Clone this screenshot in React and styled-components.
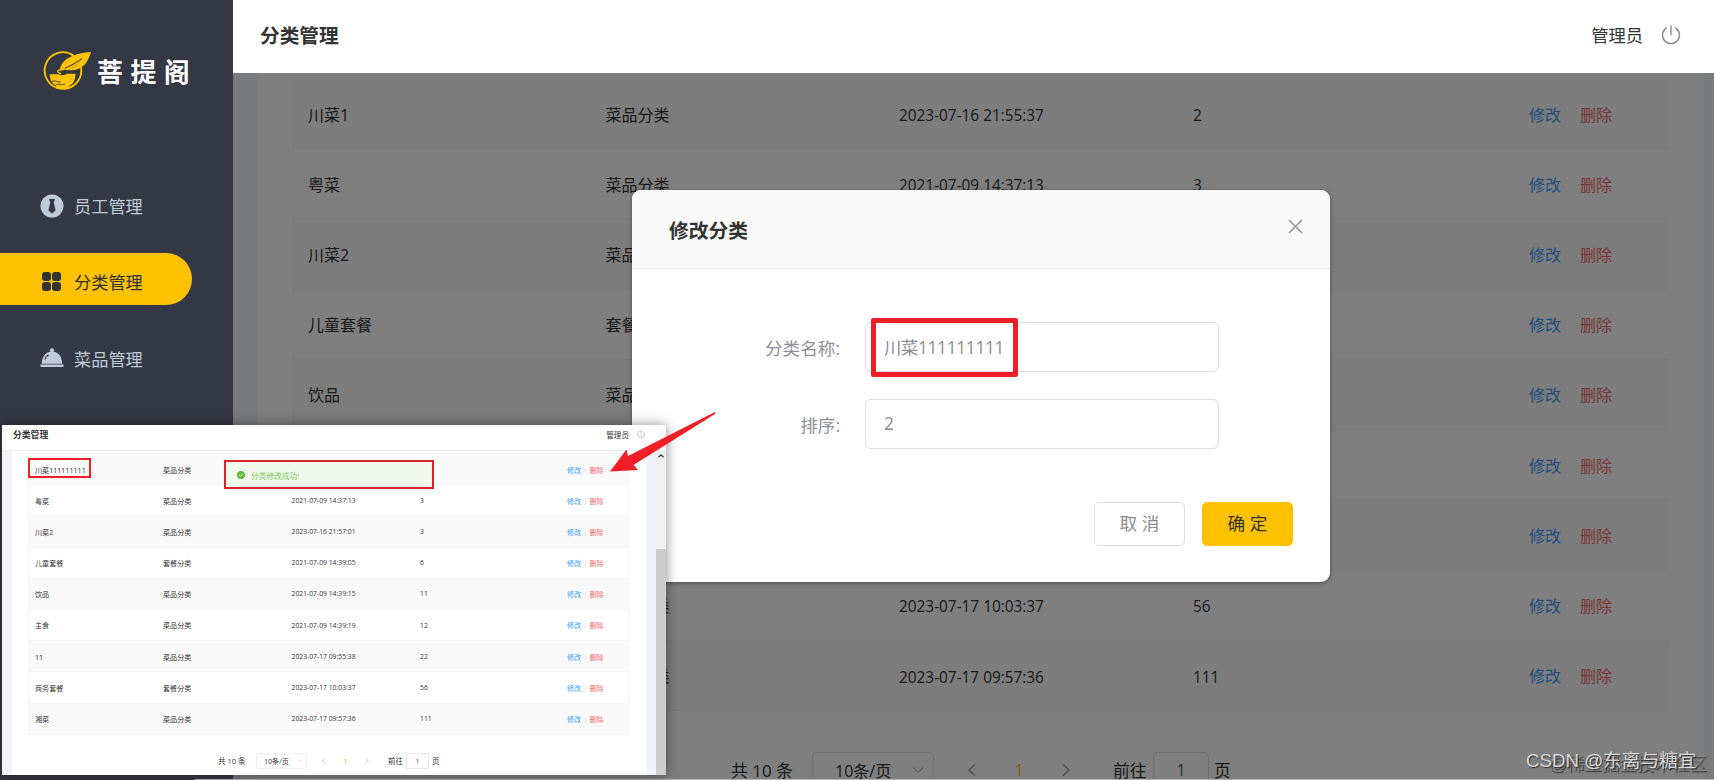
import React, { useState } from 'react'
import styled, { createGlobalStyle, css } from 'styled-components'

const GlobalStyle = createGlobalStyle`
    * {
        box-sizing: border-box;
    }
    body {
        margin: 0;
        overflow: hidden;
        font-family: "Open Sans", "Noto Sans CJK SC", sans-serif;
        color: #333333;
    }
`

const Page = styled.div`
    position: relative;
    display: flex;
    width: 1714px;
    height: 780px;
    overflow: hidden;
    background-color: #ffffff;
`

/* ---------- sidebar ---------- */

const Sidebar = styled.aside`
    flex: 0 0 233px;
    height: 780px;
    background-color: #343744;
`

const LogoBox = styled.div`
    display: flex;
    align-items: center;
    height: 142px;
    padding-left: 42px;
`

const LogoText = styled.span`
    margin-left: 5px;
    font-family: "Noto Sans CJK SC", sans-serif;
    font-size: 26px;
    font-weight: 700;
    line-height: 38px;
    letter-spacing: 7.4px;
    color: #ffffff;
    white-space: nowrap;
`

const Menu = styled.nav`
    display: flex;
    flex-direction: column;
    gap: 24.4px;
    padding-top: 35px;
`

const MenuItem = styled.div`
    display: flex;
    align-items: center;
    width: 192px;
    height: 52px;
    padding: 5px 0 0 40px;
    border-radius: 0 26px 26px 0;
    font-size: 17.2px;
    background-color: ${({ $active }) => ($active ? '#ffc200' : 'transparent')};
    color: ${({ $active }) => ($active ? '#333333' : '#bfcbd9')};
    svg {
        margin-right: 10px;
    }
`

/* ---------- main area ---------- */

const Main = styled.main`
    flex: 1;
    display: flex;
    flex-direction: column;
    height: 780px;
`

const Header = styled.header`
    display: flex;
    align-items: center;
    justify-content: space-between;
    flex: 0 0 73px;
    padding: 0 33px 2px 27px;
`

const HeaderTitle = styled.h1`
    margin: 0;
    font-size: 19.7px;
    line-height: 28px;
`

const UserBox = styled.div`
    display: flex;
    align-items: center;
    gap: 18px;
    padding-bottom: 2px;
    font-size: 17.3px;
`

const Content = styled.section`
    position: relative;
    flex: 1;
    padding: 0 10px 0 24px;
    overflow: hidden;
    background-color: #f3f4f7;
`

const Card = styled.div`
    height: 100%;
    padding: 6px 35px 0;
    background-color: #ffffff;
`

const TableBox = styled.div`
    border: solid #f6f6f7;
    border-width: 0 1px;
`

const Row = styled.div`
    display: grid;
    grid-template-columns: 297.5px 293.5px 294px 336px 1fr;
    align-items: center;
    height: 70.2px;
    padding: 2px 0 0 15px;
    border-bottom: 1px solid #f5f5f7;
    font-size: 16px;
    background-color: ${({ $odd }) => ($odd ? '#fafafa' : '#ffffff')};
    ${({ $mini }) => $mini && css`
        grid-template-columns: 128px 128.5px 128.5px 147px 1fr;
        height: 31.2px;
        padding: 1.5px 0 0 6px;
        font-size: 7.1px;
    `}
`

const Cell = styled.span`
    white-space: nowrap;
    line-height: 1.5;
`

const NumCell = styled(Cell)`
    padding-top: ${({ $mini }) => ($mini ? 0 : 2)}px;
    font-size: 0.96em;
`

const Actions = styled.div`
    display: flex;
    gap: ${({ $mini }) => ($mini ? '3.6px' : '19px')};
    line-height: 1.5;
`

const EditBtn = styled.span`
    color: #409eff;
`

const DelBtn = styled.span`
    color: #f56c6c;
`

const Divider = styled.i`
    width: 1px;
    height: 6px;
    margin-top: 3px;
    background-color: #e8eaec;
`

const Pager = styled.div`
    display: grid;
    grid-template-columns: 81px 122px 160px 19px 40px 56px 1fr;
    align-items: center;
    height: 36px;
    margin: 41px 0 0 439px;
    font-size: 16px;
    ${({ $mini }) => $mini && css`
        grid-template-columns: 38px 51px 81px 18px 23px 1fr;
        height: 16px;
        margin: 18px 0 0 190px;
        font-size: 7.1px;
    `}
`

const Total = styled.span`
    font-size: 1.06em;
    white-space: nowrap;
`

const PageSize = styled.div`
    display: flex;
    align-items: center;
    justify-content: space-between;
    height: 100%;
    padding: ${({ $mini }) => ($mini ? '0 4px 0 7px' : '0 9px 0 22px')};
    border: 1px solid ${({ $mini }) => ($mini ? '#eeeff1' : '#e3e5e8')};
    border-radius: ${({ $mini }) => ($mini ? '2px' : '5px')};
    white-space: nowrap;
`

const Pages = styled.div`
    display: flex;
    align-items: center;
    justify-content: space-between;
    padding: ${({ $mini }) => ($mini ? '0 18px 0 14px' : '0 21px 0 31px')};
`

const Current = styled.b`
    font-weight: 500;
    color: #ffc200;
`

const Jump = styled.span`
    grid-column: ${({ $mini }) => ($mini ? 'auto' : '4 / 6')};
    padding-left: ${({ $mini }) => ($mini ? '0' : '19px')};
    font-size: 1.05em;
    white-space: nowrap;
`

const JumpInput = styled.div`
    display: flex;
    align-items: center;
    justify-content: center;
    height: 100%;
    border: 1px solid ${({ $mini }) => ($mini ? '#e6e7e9' : '#dcdfe6')};
    border-radius: ${({ $mini }) => ($mini ? '1px' : '5px')};
    color: #606266;
`

const PageUnit = styled.span`
    padding-left: ${({ $mini }) => ($mini ? '3px' : '5px')};
    font-size: 1.05em;
`

/* ---------- dialog ---------- */

const Mask = styled.div`
    position: absolute;
    inset: 73px 0 1px 233px;
    background-color: rgba(0, 0, 0, 0.5);
`

const BottomEdge = styled.div`
    position: absolute;
    left: 195px;
    right: 0;
    bottom: 0;
    height: 1px;
    background-color: #b4b4b4;
`

const Dialog = styled.div`
    position: absolute;
    left: 632px;
    top: 190px;
    width: 698px;
    height: 392px;
    border-radius: 9px;
    background-color: #ffffff;
    box-shadow: 0 1px 4px rgba(0, 0, 0, 0.4);
    overflow: hidden;
`

const DialogHeader = styled.div`
    display: flex;
    align-items: center;
    justify-content: space-between;
    height: 79px;
    padding: 0 27px 0 37px;
    border-bottom: 1px solid #e8e8e8;
    background-color: #fafafa;
    svg {
        margin-bottom: 5px;
    }
`

const DialogTitle = styled.h2`
    margin: 3px 0 0;
    font-size: 19.8px;
    line-height: 28px;
`

const DialogBody = styled.div`
    display: flex;
    flex-direction: column;
    gap: 27px;
    padding-top: 53px;
`

const FormItem = styled.label`
    display: flex;
    align-items: center;
    font-size: 17.6px;
    color: #8e9197;
`

const Label = styled.span`
    width: 208px;
    margin: 0 25px 0 0;
    text-align: right;
`

const Input = styled.input`
    width: 354px;
    height: 50px;
    padding: 0 18px 1px;
    border: 1px solid #dcdfe6;
    border-radius: 6px;
    outline: none;
    font-family: inherit;
    font-size: 17.3px;
    letter-spacing: -0.3px;
    color: #8b8d91;
`

const DialogFooter = styled.div`
    display: flex;
    justify-content: flex-end;
    gap: 17px;
    padding: 53px 37px 0 0;
`

const Button = styled.button`
    width: 91px;
    height: 44px;
    padding: 0 0 3px;
    border: 1px solid ${({ $primary }) => ($primary ? '#ffc200' : '#dcdfe6')};
    border-radius: 5px;
    background-color: ${({ $primary }) => ($primary ? '#ffc200' : '#ffffff')};
    color: ${({ $primary }) => ($primary ? '#333333' : '#8a8c91')};
    font-family: inherit;
    font-size: 17.6px;
`

/* ---------- floating result window ---------- */

const Window = styled.div`
    position: absolute;
    left: 2px;
    top: 425px;
    display: flex;
    flex-direction: column;
    width: 664px;
    height: 350px;
    background-color: #ffffff;
    box-shadow: 0 0 12px rgba(0, 0, 0, 0.45);
`

const WindowHeader = styled.div`
    display: flex;
    align-items: center;
    justify-content: space-between;
    flex: 0 0 26px;
    padding: 0 21px 7px 11px;
    border-bottom: 1px solid #ececee;
    font-size: 7.6px;
`

const WindowTitle = styled.b`
    font-size: 8.8px;
`

const WindowUser = styled.span`
    display: flex;
    align-items: center;
    gap: 8px;
`

const WindowBody = styled.div`
    display: flex;
    flex: 1;
    padding-left: 10px;
    background-color: #f2f3f8;
`

const WindowCard = styled.div`
    flex: 0 0 634px;
    padding: 2px 17px 0 16px;
    background-color: #ffffff;
`

const MiniTable = styled(TableBox)`
    border-width: 1px 1px 0;
`

const ScrollTrack = styled.div`
    display: flex;
    flex-direction: column;
    justify-content: space-between;
    align-items: center;
    width: 10px;
    margin-left: auto;
    padding-top: 2px;
    background-color: #f0f0f0;
`

const ScrollThumb = styled.div`
    width: 10px;
    height: 226px;
    background-color: #cdcdcd;
`

const Toast = styled.div`
    position: absolute;
    left: 222px;
    top: 35px;
    display: flex;
    align-items: center;
    gap: 6px;
    width: 210px;
    height: 29px;
    padding: 1px 0 0 11px;
    border: 2px solid #d8262c;
    background-color: #f0f9eb;
    color: #7cc95a;
    font-size: 7.7px;
`

/* ---------- red annotations ---------- */

const Mark = styled.div`
    position: absolute;
    left: ${({ $x }) => $x}px;
    top: ${({ $y }) => $y}px;
    width: ${({ $w }) => $w}px;
    height: ${({ $h }) => $h}px;
    border: ${({ $line }) => $line}px solid #ee1f26;
    border-radius: ${({ $line }) => ($line > 2 ? 2 : 0)}px;
`

const Arrow = styled.svg`
    position: absolute;
    left: 608px;
    top: 408px;
`

const Watermark = styled.span`
    position: absolute;
    left: 1526px;
    top: 747px;
    font-family: "Liberation Sans", "Noto Sans CJK SC", sans-serif;
    font-size: 18.7px;
    line-height: 28px;
    white-space: nowrap;
    color: rgba(235, 235, 235, 0.88);
    text-shadow: 1px 1px 1px rgba(0, 0, 0, 0.6);
`

const WatermarkBack = styled(Watermark)`
    left: 1549px;
    top: 750px;
    font-size: 17.5px;
    color: rgba(150, 150, 150, 0.55);
    text-shadow: 1px 1px 1px rgba(0, 0, 0, 0.55);
`

const dishes = [
    { name: '川菜1', type: '菜品分类', time: '2023-07-16 21:55:37', sort: 2 },
    { name: '粤菜', type: '菜品分类', time: '2021-07-09 14:37:13', sort: 3 },
    { name: '川菜2', type: '菜品分类', time: '2023-07-16 21:57:01', sort: 3 },
    { name: '儿童套餐', type: '套餐分类', time: '2021-07-09 14:39:05', sort: 6 },
    { name: '饮品', type: '菜品分类', time: '2021-07-09 14:39:15', sort: 11 },
    { name: '主食', type: '菜品分类', time: '2021-07-09 14:39:19', sort: 12 },
    { name: '11', type: '菜品分类', time: '2023-07-17 09:55:38', sort: 22 },
    { name: '商务套餐', type: '套餐分类', time: '2023-07-17 10:03:37', sort: 56 },
    { name: '湘菜', type: '菜品分类', time: '2023-07-17 09:57:36', sort: 111 },
]

// 修改之后的第一行
const updated = [{ name: '川菜111111111', type: '菜品分类', time: '', sort: '' }, ...dishes.slice(1)]

const LogoIcon = () => (
    <svg width="50" height="40" viewBox="0 0 50 40">
        <path d="M31.5 4.6A18.3 18.3 0 1 0 38.8 15.5" fill="none" stroke="#ffc200" strokeWidth="1.9" />
        <path d="M18 19.5C18.5 9 30 2.5 49 1C46 12.5 39 20.5 26 19.2C32 16 36 12.5 41 6.8C33 12 25 16 18 19.5Z" fill="#ffc200" />
        <path d="M20 18.2C27 15.5 34 12 41 6.8C36 12.5 32 16 26 19.2Z" fill="#ffc200" />
        <path d="M23 17.2C30 14.5 35.5 11 40 7.4" fill="none" stroke="#343744" strokeWidth="0.8" />
        <path d="M22 18.5C14 18.5 14.5 21.5 19 22.5" fill="none" stroke="#ffc200" strokeWidth="1.4" />
        <path d="M7.5 23.2H17C19 24.8 23 24.5 25 22.8H33.5C33.5 29.5 31 33 27.5 34.8V37.5H14V34.8C10 32 8 29 7.5 23.2Z" fill="#ffc200" />
        <path d="M10 30.2C13 29 15 31.5 19 31M14 33.6C17 32.4 19 34.4 23 33" fill="none" stroke="#343744" strokeWidth="0.8" />
    </svg>
)

const StaffIcon = () => (
    <svg width="24" height="24" viewBox="0 0 24 24">
        <circle cx="12" cy="12" r="11.5" fill="#bfcbd9" />
        <path d="M9 5H15L13.7 8.2L15.6 16.5L12 19.6L8.4 16.5L10.3 8.2Z" fill="#343744" />
    </svg>
)

const GridIcon = () => (
    <svg width="24" height="22" viewBox="0 0 24 22" fill="#333333">
        <rect x="2" y="1" width="9" height="9" rx="3" />
        <rect x="12" y="1" width="9" height="9" rx="3" />
        <rect x="2" y="11" width="9" height="9" rx="3" />
        <rect x="12" y="11" width="9" height="9" rx="3" />
    </svg>
)

const DishIcon = () => (
    <svg width="24" height="20" viewBox="0 0 24 20" fill="#bfcbd9">
        <circle cx="12" cy="2.3" r="2.1" />
        <path d="M1.7 15.8C2 7.5 6.5 3.4 12 3.4S22 7.5 22.3 15.8ZM0.5 16.6H23.5V18.9H0.5Z" />
        <path d="M5 11.5C5.4 9.3 6.6 7.8 8.6 7" fill="none" stroke="#343744" strokeWidth="1.1" />
    </svg>
)

const PowerIcon = ({ size = 20 }) => (
    <svg width={size} height={size} viewBox="0 0 20 20" fill="none" stroke="#8c8c8c" strokeWidth="1.4">
        <path d="M6 2.6A8.5 8.5 0 1 0 14 2.6M10 0.5V10.5" />
    </svg>
)

const Chevron = ({ size, d, color = '#a0a4ac', line = 1.2 }) => (
    <svg width={size} height={size} viewBox="0 0 12 12" fill="none" stroke={color} strokeWidth={line}>
        <path d={d} />
    </svg>
)

const CheckIcon = () => (
    <svg width="8" height="8" viewBox="0 0 16 16">
        <circle cx="8" cy="8" r="8" fill="#5fba35" />
        <path d="M4.5 8.2L7 10.6L11.6 5.8" fill="none" stroke="#ffffff" strokeWidth="1.7" />
    </svg>
)

const Rows = ({ list, mini }) => list.map((item, i) => (
    <Row key={item.name} $odd={i % 2 === 0} $mini={mini}>
        <Cell>{item.name}</Cell>
        <Cell>{item.type}</Cell>
        <NumCell $mini={mini}>{item.time}</NumCell>
        <NumCell $mini={mini}>{item.sort}</NumCell>
        <Actions $mini={mini}>
            <EditBtn>修改</EditBtn>
            {mini && <Divider />}
            <DelBtn>删除</DelBtn>
        </Actions>
    </Row>
))

const Pagination = ({ mini }) => (
    <Pager $mini={mini}>
        <Total>共 10 条</Total>
        <PageSize $mini={mini}>
            10条/页
            <Chevron size={mini ? 5 : 12} d="M1 3.5L6 8.5L11 3.5" color="#c0c4cc" />
        </PageSize>
        <Pages $mini={mini}>
            <Chevron size={mini ? 6 : 14} d="M8.5 1L3.5 6L8.5 11" />
            <Current>1</Current>
            <Chevron size={mini ? 6 : 14} d="M3.5 1L8.5 6L3.5 11" />
        </Pages>
        <Jump $mini={mini}>前往</Jump>
        <JumpInput $mini={mini}>1</JumpInput>
        <PageUnit $mini={mini}>页</PageUnit>
    </Pager>
)

const App = () => {

    const [form, setForm] = useState({ name: '川菜111111111', sort: '2' })

    const onChange = (key) => (e) => setForm({ ...form, [key]: e.target.value })

    return (
        <Page>
            <GlobalStyle />
            <Sidebar>
                <LogoBox>
                    <LogoIcon />
                    <LogoText>菩提阁</LogoText>
                </LogoBox>
                <Menu>
                    <MenuItem><StaffIcon />员工管理</MenuItem>
                    <MenuItem $active><GridIcon />分类管理</MenuItem>
                    <MenuItem><DishIcon />菜品管理</MenuItem>
                </Menu>
            </Sidebar>
            <Main>
                <Header>
                    <HeaderTitle>分类管理</HeaderTitle>
                    <UserBox>管理员<PowerIcon /></UserBox>
                </Header>
                <Content>
                    <Card>
                        <TableBox><Rows list={dishes} /></TableBox>
                        <Pagination />
                    </Card>
                </Content>
            </Main>

            <Mask />
            <BottomEdge />

            <Dialog>
                <DialogHeader>
                    <DialogTitle>修改分类</DialogTitle>
                    <Chevron size={15} d="M0.8 0.8L11.2 11.2M11.2 0.8L0.8 11.2" color="#909399" />
                </DialogHeader>
                <DialogBody>
                    <FormItem>
                        <Label>分类名称:</Label>
                        <Input value={form.name} onChange={onChange('name')} />
                    </FormItem>
                    <FormItem>
                        <Label>排序:</Label>
                        <Input value={form.sort} onChange={onChange('sort')} />
                    </FormItem>
                </DialogBody>
                <DialogFooter>
                    <Button>取 消</Button>
                    <Button $primary>确 定</Button>
                </DialogFooter>
            </Dialog>

            <Window>
                <WindowHeader>
                    <WindowTitle>分类管理</WindowTitle>
                    <WindowUser>管理员<PowerIcon size={8} /></WindowUser>
                </WindowHeader>
                <WindowBody>
                    <WindowCard>
                        <MiniTable><Rows list={updated} mini /></MiniTable>
                        <Pagination mini />
                    </WindowCard>
                    <ScrollTrack>
                        <Chevron size={6} d="M1 8.5L6 3.5L11 8.5" color="#333333" line={2.4} />
                        <ScrollThumb />
                    </ScrollTrack>
                </WindowBody>
                <Toast><CheckIcon />分类修改成功!</Toast>
            </Window>

            <Mark $x={871} $y={318} $w={147} $h={59} $line={5} />
            <Mark $x={28} $y={458} $w={63} $h={20} $line={2} />
            <Arrow width="112" height="66" viewBox="0 0 112 66">
                <path d="M2 63.5L18.5 41.5L20 48L106 4.5Q109 3.5 107 6L25.5 57L30 62Z" fill="#ee1f26" />
            </Arrow>

            <WatermarkBack>@稀土掘金技术社区</WatermarkBack>
            <Watermark>CSDN @东离与糖宜</Watermark>
        </Page>
    )
}

export default App
